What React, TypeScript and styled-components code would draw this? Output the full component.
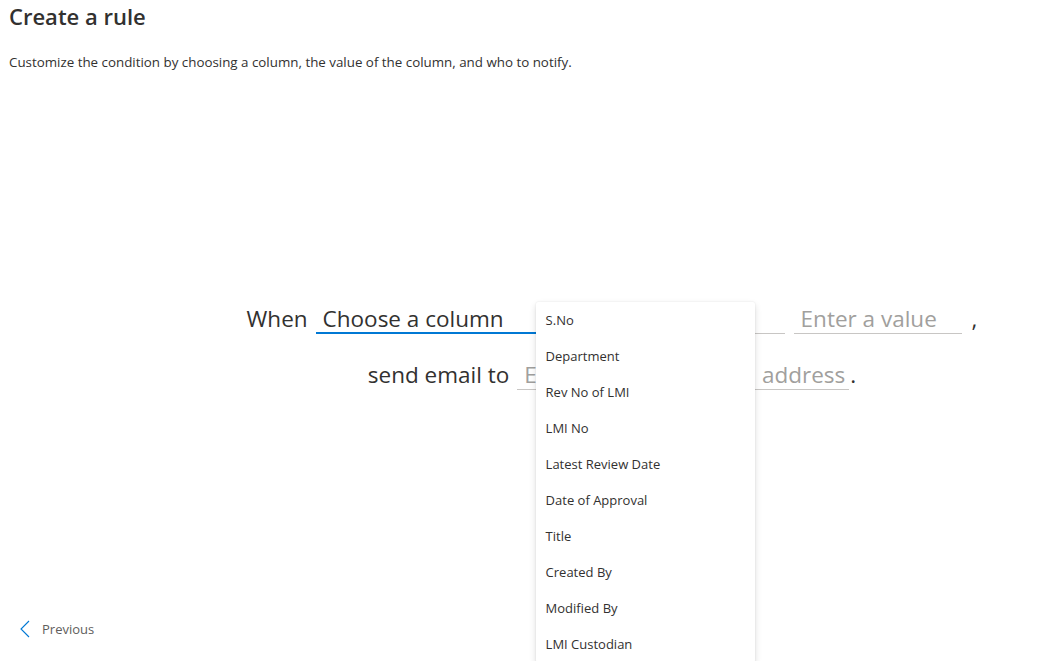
import React from "react";
import styled, { createGlobalStyle } from "styled-components";

const Global = createGlobalStyle`
  html, body { margin: 0; padding: 0; background: #ffffff; overflow: hidden; }
  body { font-family: "Open Sans", "Noto Sans", sans-serif; color: #323130; }
  * { box-sizing: border-box; }
`;

const Page = styled.div`
  height: 661px;
  display: flex;
  flex-direction: column;
`;

const Header = styled.header`
  padding: 0 9px;
`;

const Title = styled.h1`
  margin: 0;
  padding-top: 2px;
  font-size: 22px;
  line-height: 28px;
  font-weight: 600;
  color: #323130;
`;

const Subtitle = styled.p`
  margin: 23px 0 0;
  font-size: 13.35px;
  line-height: 18px;
  color: #323130;
`;

const Main = styled.main`
  flex: 1;
  padding: 231px 0 0 163px;
  display: flex;
  flex-direction: column;
  align-items: center;
  gap: 24px;
`;

const Sentence = styled.div`
  display: flex;
  align-items: flex-end;
  font-size: 22.5px;
  line-height: 30px;
  color: #323130;
`;

const Label = styled.span<{ $gap?: number }>`
  margin-right: ${(p) => p.$gap ?? 8}px;
  white-space: nowrap;
`;

const Punct = styled.span<{ $gap: number }>`
  margin-left: ${(p) => p.$gap}px;
`;

const Field = styled.div<{ $w: number; $focused?: boolean; $gap?: number }>`
  position: relative;
  width: ${(p) => p.$w}px;
  height: 32px;
  line-height: 34px;
  padding: 0 6px 0 7px;
  margin-right: ${(p) => p.$gap ?? 0}px;
  border-bottom: 1px solid #c8c6c4;
  white-space: nowrap;
  &::after {
    content: "";
    display: ${(p) => (p.$focused ? "block" : "none")};
    position: absolute;
    left: 0;
    bottom: -1px;
    width: 230px;
    height: 2px;
    background: #0078d4;
  }
`;

const Value = styled.span<{ $placeholder?: boolean }>`
  color: ${(p) => (p.$placeholder ? "#a19f9d" : "#323130")};
`;

const Menu = styled.ul`
  position: absolute;
  left: 220px;
  top: 0;
  z-index: 2;
  width: 219px;
  margin: 0;
  padding: 0;
  list-style: none;
  background: #ffffff;
  border-radius: 2px;
  box-shadow: 0 3.2px 7.2px rgba(0, 0, 0, 0.132), 0 0.6px 1.8px rgba(0, 0, 0, 0.108);
`;

const MenuItem = styled.li`
  height: 36px;
  padding: 0 10px;
  display: flex;
  align-items: center;
  font-size: 13px;
  line-height: 18px;
  color: #323130;
`;

const Footer = styled.footer`
  height: 64px;
  padding-left: 19px;
  display: flex;
  align-items: center;
`;

const BackButton = styled.button`
  display: flex;
  align-items: center;
  gap: 11px;
  padding: 0;
  border: 0;
  background: none;
  font-family: inherit;
  font-size: 13px;
  color: #605e5c;
  cursor: pointer;
`;

const columns = [
  "S.No",
  "Department",
  "Rev No of LMI",
  "LMI No",
  "Latest Review Date",
  "Date of Approval",
  "Title",
  "Created By",
  "Modified By",
  "LMI Custodian",
];

export default function App() {
  return (
    <Page>
      <Global />
      <Header>
        <Title>Create a rule</Title>
        <Subtitle>
          Customize the condition by choosing a column, the value of the column, and who to notify.
        </Subtitle>
      </Header>
      <Main>
        <Sentence>
          <Label>When</Label>
          <Field $w={469} $focused $gap={9}>
            <Value>Choose a column</Value>
            <Menu>
              {columns.map((c) => (
                <MenuItem key={c}>{c}</MenuItem>
              ))}
            </Menu>
          </Field>
          <Field $w={168}>
            <Value $placeholder>Enter a value</Value>
          </Field>
          <Punct $gap={10}>,</Punct>
        </Sentence>
        <Sentence>
          <Label>send email to</Label>
          <Field $w={332}>
            <Value $placeholder>Enter a name or email address</Value>
          </Field>
          <Punct $gap={1}>.</Punct>
        </Sentence>
      </Main>
      <Footer>
        <BackButton>
          <svg width="12" height="18" viewBox="0 0 12 18" fill="none">
            <path d="M10 1 L2 9 L10 17" stroke="#0078d4" strokeWidth="1.1" />
          </svg>
          Previous
        </BackButton>
      </Footer>
    </Page>
  );
}
